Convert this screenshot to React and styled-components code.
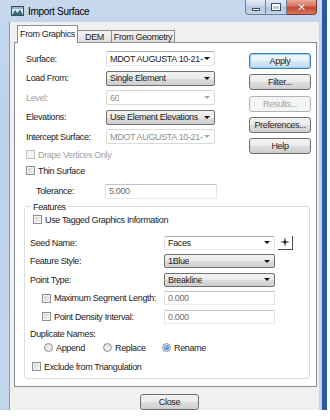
import React from 'react';
import styled, { createGlobalStyle, css } from 'styled-components';

const GlobalStyle = createGlobalStyle`
  html, body { margin: 0; padding: 0; background: #ffffff; }
  body {
    font-family: "Liberation Sans", Arial, sans-serif;
    font-size: 9px;
    letter-spacing: -0.35px;
    color: #222;
  }
  * { box-sizing: border-box; }
`;

// outer window frame
const Window = styled.div`
  width: 327px;
  height: 410px;
  display: flex;
  flex-direction: column;
  background: linear-gradient(180deg, #c6d8ee 0%, #bcd0e9 30%, #c4d6ec 100%);
  border-right: 5px solid #2b5a9c;
`;

const TitleBar = styled.div`
  height: 22px;
  display: flex;
  align-items: center;
  padding-left: 11px;
`;

const Title = styled.span`
  margin-left: 4px;
  font-size: 10px;
  letter-spacing: -0.3px;
  color: #000;
`;

const Controls = styled.div`
  display: flex;
  align-self: flex-start;
  margin-left: auto;
  margin-right: 5px;
`;

const CaptionButton = styled.div`
  width: ${p => p.$w}px;
  height: 15px;
  display: flex;
  align-items: center;
  justify-content: center;
  border: 1px solid #6a7f9c;
  border-top: none;
  background: linear-gradient(180deg, #e2eaf5 0%, #c9d7ea 45%, #b2c4dc 50%, #c6d5ea 100%);
  & + & { border-left: none; }
  &:first-child { border-bottom-left-radius: 4px; }
  &:last-child { border-bottom-right-radius: 4px; }
  ${p => p.$close && css`
    border-color: #7d3a30;
    background: linear-gradient(180deg, #e9a99a 0%, #d4705a 45%, #c0432a 50%, #d8775c 100%);
  `}
`;

const MinGlyph = styled.div`
  width: 8px;
  height: 3px;
  margin-top: 4px;
  background: #fff;
  border: 1px solid #3e4d63;
`;

const MaxGlyph = styled.div`
  width: 8px;
  height: 6px;
  border: 1px solid #fff;
  border-top-width: 2px;
  box-shadow: 0 0 0 1px #3e4d63;
`;

const CloseGlyph = styled.span`
  color: #fff;
  font-family: "DejaVu Sans", sans-serif;
  font-weight: bold;
  font-size: 11px;
  letter-spacing: 0;
  text-shadow: 0 0 1px #5a1a10;
`;

// client area
const Client = styled.div`
  flex: 1;
  margin: 0 3px 0 9px;
  border-left: 1px solid #8a9cb5;
  background: #f0f0f0;
  padding: 3px 2px 0 4px;
  display: flex;
  flex-direction: column;
`;

const TabStrip = styled.div`
  height: 17px;
  display: flex;
  align-items: flex-end;
  padding-left: 3px;
`;

const Tab = styled.div`
  width: ${p => p.$w}px;
  height: 12px;
  margin-left: -1px;
  display: flex;
  align-items: center;
  justify-content: center;
  border: 1px solid #898c95;
  border-bottom: none;
  background: linear-gradient(180deg, #f3f3f3 0%, #ebebeb 50%, #dedede 100%);
  ${p => p.$active && css`
    height: 18px;
    margin-bottom: -1px;
    margin-left: 0;
    position: relative;
    z-index: 2;
    background: #ffffff;
    padding-bottom: 2px;
  `}
`;

const Panel = styled.div`
  height: 345px;
  background: #ffffff;
  border: 1px solid #898c95;
  padding: 8px 6px 0 9px;
  display: flex;
  flex-direction: column;
`;

const TopSection = styled.div`
  display: flex;
  margin-left: 2px;
`;

const LeftCol = styled.div`
  display: flex;
  flex-direction: column;
`;

const FormGrid = styled.div`
  display: grid;
  grid-template-columns: ${p => p.$cols};
  grid-auto-rows: ${p => p.$row}px;
  row-gap: 4.5px;
  align-items: center;
  margin-top: ${p => p.$top || 0}px;
`;

const Label = styled.span`
  color: ${p => (p.$disabled ? '#a0a0a0' : '#222')};
  white-space: nowrap;
`;

const comboKinds = {
  edit: css`
    background: #ffffff;
    border-color: #abadb3 #dbdfe6 #e3e9ef #e2e3ea;
    color: #222;
  `,
  list: css`
    background: linear-gradient(180deg, #f2f2f2 0%, #ebebeb 50%, #dddddd 51%, #cfcfcf 100%);
    border-color: #707070;
    color: #222;
  `,
  disabled: css`
    background: #ffffff;
    border-color: #d9d9d9;
    color: #8e8e8e;
  `,
};

const Combo = styled.div`
  height: ${p => p.$h || 15}px;
  display: flex;
  align-items: center;
  padding-left: 3px;
  border: 1px solid;
  border-radius: 2px;
  white-space: nowrap;
  overflow: hidden;
  ${p => comboKinds[p.$kind || 'edit']}
  &::after {
    content: '';
    margin-left: auto;
    margin-right: 4px;
    flex-shrink: 0;
    border-left: 3px solid transparent;
    border-right: 3px solid transparent;
    border-top: 3px solid ${p => (p.$kind === 'disabled' ? '#a8a8a8' : '#111')};
  }
`;

const ComboText = styled.span`
  overflow: hidden;
`;

const Field = styled.div`
  height: ${p => p.$h || 15}px;
  width: ${p => (p.$w ? `${p.$w}px` : 'auto')};
  display: flex;
  align-items: center;
  padding-left: 3px;
  background: #ffffff;
  border: 1px solid;
  border-color: #c2c4ca #e0e3e8 #e6e9ee #e0e3e8;
  border-radius: 1px;
  color: #6d6d6d;
`;

const ButtonColumn = styled.div`
  display: flex;
  flex-direction: column;
  gap: 5.3px;
  margin-left: 32px;
  padding-top: 2px;
`;

const Button = styled.div`
  width: ${p => p.$w || 62}px;
  height: 16px;
  display: flex;
  align-items: center;
  justify-content: center;
  border: 1px solid #707070;
  border-radius: 3px;
  background: linear-gradient(180deg, #f2f2f2 0%, #ebebeb 50%, #dddddd 51%, #cfcfcf 100%);
  color: #222;
  ${p => p.$focus && css`
    border-color: #3c7fb1;
    box-shadow: inset 0 0 0 1px #8fd0f3;
    background: linear-gradient(180deg, #f0f6fa 0%, #e6f1f9 50%, #d4e7f4 51%, #c6def0 100%);
  `}
  ${p => p.$disabled && css`
    border-color: #adb2b5;
    background: #f4f4f4;
    color: #a3a3a3;
  `}
`;

const CheckRow = styled.div`
  height: 11px;
  display: flex;
  align-items: center;
  gap: 3px;
  margin-top: ${p => p.$top || 0}px;
  margin-left: ${p => p.$left || 0}px;
`;

const Box = styled.span`
  width: 9px;
  height: 9px;
  flex-shrink: 0;
  border: 1px solid ${p => (p.$disabled ? '#c4c4c4' : '#8e8f8f')};
  background: ${p => (p.$disabled
    ? '#f6f6f6'
    : 'linear-gradient(135deg, #c9c9c9 0%, #e4e4e4 50%, #f6f6f6 100%)')};
  box-shadow: inset 0 0 0 1px ${p => (p.$disabled ? '#f0f0f0' : '#f4f4f4')};
`;

const ToleranceRow = styled.div`
  display: flex;
  align-items: center;
  margin-top: 7.5px;
  padding-left: 10px;
`;

const Group = styled.fieldset`
  margin: 3px 0 0 0;
  padding: 0 0 5.5px 5px;
  border: 1px solid #d5dfe5;
  border-radius: 3px;
  min-width: 0;
`;

const Legend = styled.legend`
  margin-left: 1px;
  padding: 0 2px;
  line-height: 10px;
  color: #222;
`;

const PlusButton = styled.div`
  width: 15px;
  height: 14px;
  margin-left: 3px;
  display: flex;
  align-items: center;
  justify-content: center;
  background: #ffffff;
  border-right: 1px solid #4a4a4a;
  border-bottom: 1px solid #4a4a4a;
`;

const Indented = styled.div`
  display: flex;
  align-items: center;
  gap: 3px;
  padding-left: 12px;
`;

const TextRow = styled.div`
  height: 10px;
  display: flex;
  align-items: center;
  margin-top: 5px;
`;

const RadioRow = styled.div`
  height: 11px;
  display: flex;
  align-items: center;
  margin-top: 3.5px;
  padding-left: 14px;
`;

const RadioItem = styled.label`
  width: 59px;
  display: flex;
  align-items: center;
  gap: 3px;
`;

const Radio = styled.span`
  width: 9px;
  height: 9px;
  border-radius: 50%;
  border: 1px solid #8e8f8f;
  background: radial-gradient(circle at 60% 60%, #f4f4f4 0%, #d9d9d9 100%);
  display: flex;
  align-items: center;
  justify-content: center;
  &::after {
    content: '';
    width: 5px;
    height: 5px;
    border-radius: 50%;
    background: ${p => (p.$on ? 'radial-gradient(circle at 35% 35%, #9ccaf5 0%, #2f74c8 80%)' : 'transparent')};
  }
`;

const Footer = styled.div`
  display: flex;
  margin-top: 7px;
  padding-left: 126px;
`;

function WindowIcon() {
  return (
    <svg width="13" height="10" viewBox="0 0 13 10">
      <rect x="0" y="0" width="13" height="10" fill="#3b4b5c" />
      <rect x="1" y="1" width="11" height="8" fill="#dfe8ee" />
      <path d="M1 9 L4 4 L6.5 7 L9 3.5 L12 9 Z" fill="#2e6f7d" />
      <rect x="1" y="1" width="11" height="2" fill="#8fb3c8" />
    </svg>
  );
}

function StarIcon() {
  return (
    <svg width="10" height="10" viewBox="0 0 10 10">
      <polygon points="5,0 5.8,4.2 10,5 5.8,5.8 5,10 4.2,5.8 0,5 4.2,4.2" fill="#111" />
    </svg>
  );
}

function Check({ label, disabled, top, left }) {
  return (
    <CheckRow $top={top} $left={left}>
      <Box $disabled={disabled} />
      <Label $disabled={disabled}>{label}</Label>
    </CheckRow>
  );
}

export default function App() {
  return (
    <>
      <GlobalStyle />
      <Window>
        <TitleBar>
          <WindowIcon />
          <Title>Import Surface</Title>
          <Controls>
            <CaptionButton $w={21}><MinGlyph /></CaptionButton>
            <CaptionButton $w={21}><MaxGlyph /></CaptionButton>
            <CaptionButton $w={30} $close><CloseGlyph>✕</CloseGlyph></CaptionButton>
          </Controls>
        </TitleBar>

        <Client>
          <TabStrip>
            <Tab $w={61} $active>From Graphics</Tab>
            <Tab $w={35}>DEM</Tab>
            <Tab $w={64}>From Geometry</Tab>
          </TabStrip>

          <Panel>
            <TopSection>
              <LeftCol>
                <FormGrid $cols="80px 109px" $row={15}>
                  <Label>Surface:</Label>
                  <Combo $kind="edit"><ComboText>MDOT AUGUSTA 10-21-</ComboText></Combo>
                  <Label>Load From:</Label>
                  <Combo $kind="list"><ComboText>Single Element</ComboText></Combo>
                  <Label $disabled>Level:</Label>
                  <Combo $kind="disabled"><ComboText>60</ComboText></Combo>
                  <Label>Elevations:</Label>
                  <Combo $kind="list"><ComboText>Use Element Elevations</ComboText></Combo>
                  <Label>Intercept Surface:</Label>
                  <Combo $kind="disabled"><ComboText>MDOT AUGUSTA 10-21-</ComboText></Combo>
                </FormGrid>
                <Check label="Drape Vertices Only" disabled top={5} />
                <Check label="Thin Surface" top={5} />
                <ToleranceRow>
                  <Label style={{ width: 69 }}>Tolerance:</Label>
                  <Field $w={112}>5.000</Field>
                </ToleranceRow>
              </LeftCol>
              <ButtonColumn>
                <Button $focus>Apply</Button>
                <Button>Filter...</Button>
                <Button $disabled>Results...</Button>
                <Button>Preferences...</Button>
                <Button>Help</Button>
              </ButtonColumn>
            </TopSection>

            <Group>
              <Legend>Features</Legend>
              <Check label="Use Tagged Graphics Information" top={2.5} left={3} />
              <FormGrid $cols="134px 111px auto" $row={14} $top={10.5}>
                <Label>Seed Name:</Label>
                <Combo $kind="edit" $h={14}><ComboText>Faces</ComboText></Combo>
                <PlusButton><StarIcon /></PlusButton>
                <Label>Feature Style:</Label>
                <Combo $kind="list" $h={14}><ComboText>1Blue</ComboText></Combo>
                <span />
                <Label>Point Type:</Label>
                <Combo $kind="list" $h={14}><ComboText>Breakline</ComboText></Combo>
                <span />
                <Indented><Box /><Label>Maximum Segment Length:</Label></Indented>
                <Field $h={14}>0.000</Field>
                <span />
                <Indented><Box /><Label>Point Density Interval:</Label></Indented>
                <Field $h={14}>0.000</Field>
                <span />
              </FormGrid>
              <TextRow><Label>Duplicate Names:</Label></TextRow>
              <RadioRow>
                <RadioItem><Radio /><Label>Append</Label></RadioItem>
                <RadioItem><Radio /><Label>Replace</Label></RadioItem>
                <RadioItem><Radio $on /><Label>Rename</Label></RadioItem>
              </RadioRow>
              <Check label="Exclude from Triangulation" top={8} left={2} />
            </Group>
          </Panel>

          <Footer>
            <Button $w={59}>Close</Button>
          </Footer>
        </Client>
      </Window>
    </>
  );
}
